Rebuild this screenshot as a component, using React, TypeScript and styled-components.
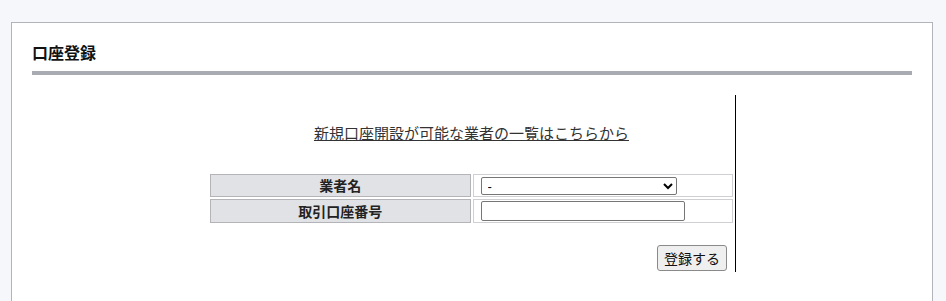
import React from 'react';
import styled, { createGlobalStyle } from 'styled-components';

const GlobalStyle = createGlobalStyle`
  html, body {
    margin: 0;
    padding: 0;
    background: #f6f7fb;
  }
  body {
    font-family: "Noto Sans CJK JP", "Liberation Sans", sans-serif;
    color: #222;
  }
`

const Page = styled.div`
  padding: 22px 13px 0 11px;
  height: 301px;
  box-sizing: border-box;
  overflow: hidden;
`

const Panel = styled.div`
  background: #fff;
  border: 1px solid #b3b4ba;
  border-bottom: none;
  padding: 17px 20px 0 20px;
  min-height: 300px;
`

const Title = styled.h2`
  margin: 0;
  font-size: 16px;
  font-weight: bold;
  line-height: 24px;
  padding: 0 0 7px 0;
  border-bottom: 4px solid #a9abb3;
  color: #111;
`

const Content = styled.div`
  width: 527px;
  margin: 20px auto 0 auto;
  border-right: 1px solid #000;
  padding: 27px 0 1px 0;
`

const LinkRow = styled.div`
  text-align: center;
  font-size: 15px;
  line-height: 22px;
  margin-bottom: 28px;
`

const ListLink = styled.a`
  color: #333;
  text-decoration: underline;
`

const FormTable = styled.table`
  width: 100%;
  border-collapse: separate;
  border-spacing: 2px;
  table-layout: fixed;
`

const Label = styled.th`
  background: #e1e2e6;
  border: 1px solid #b4b4b8;
  font-size: 14px;
  font-weight: bold;
  line-height: 19px;
  height: 20px;
  padding: 1px 4px;
  box-sizing: border-box;
  text-align: center;
  color: #222;
`

const Value = styled.td`
  border: 1px solid #cfcfd3;
  padding: 1px 7px;
  vertical-align: middle;
`

const Select = styled.select<{ $w: number }>`
  display: block;
  width: ${p => p.$w}px;
  height: 18px;
  font-size: 13px;
  font-family: "Liberation Sans", sans-serif;
  border: 1px solid #767676;
  border-radius: 2px;
  background: #fff;
  padding: 0 2px;
  box-sizing: border-box;
`

const Input = styled.input<{ $w: number }>`
  display: block;
  width: ${p => p.$w}px;
  height: 20px;
  font-size: 13px;
  border: 1px solid #767676;
  border-radius: 2px;
  padding: 0 2px;
  box-sizing: border-box;
`

const Actions = styled.div`
  text-align: right;
  padding-right: 8px;
  margin-top: 20px;
  line-height: 0;
`

const SubmitButton = styled.button`
  font-family: "Noto Sans CJK JP", sans-serif;
  font-size: 14px;
  line-height: 20px;
  height: 26px;
  padding: 0 6px;
  background: #efefef;
  color: #111;
  border: 1px solid #8a8a8a;
  border-radius: 3px;
`

export default function App() {
  return (
    <>
      <GlobalStyle />
      <Page>
        <Panel>
          <Title>口座登録</Title>
          <Content>
            <LinkRow>
              <ListLink href="#">新規口座開設が可能な業者の一覧はこちらから</ListLink>
            </LinkRow>
            <FormTable>
              <tbody>
                <tr>
                  <Label>業者名</Label>
                  <Value>
                    <Select $w={196} defaultValue="-">
                      <option value="-">-</option>
                    </Select>
                  </Value>
                </tr>
                <tr>
                  <Label>取引口座番号</Label>
                  <Value>
                    <Input $w={204} type="text" />
                  </Value>
                </tr>
              </tbody>
            </FormTable>
            <Actions>
              <SubmitButton type="button">登録する</SubmitButton>
            </Actions>
          </Content>
        </Panel>
      </Page>
    </>
  );
}
